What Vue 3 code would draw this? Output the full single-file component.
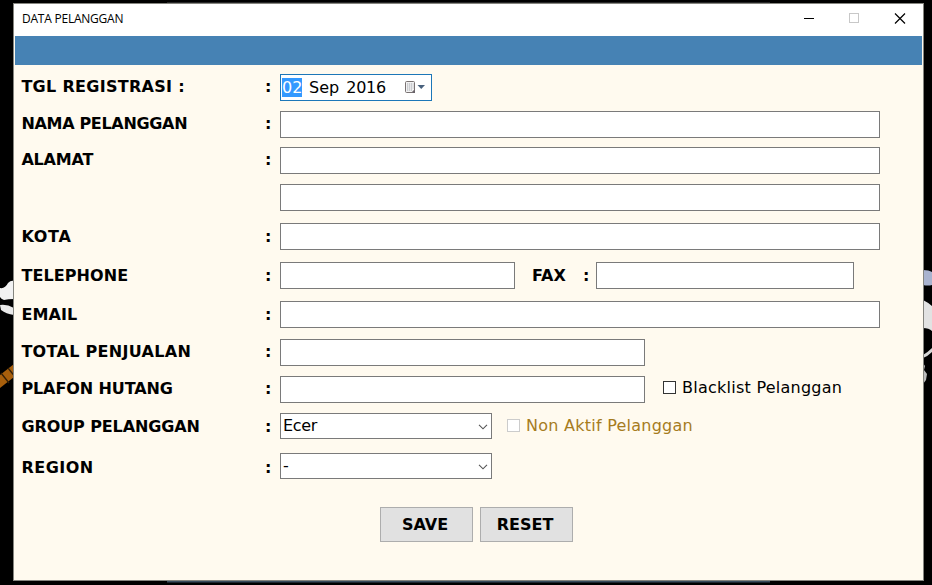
<script setup>
import { ref } from 'vue'

const rows = [
  { id: 'tgl', label: 'TGL REGISTRASI :', colon: true },
  { id: 'nama', label: 'NAMA PELANGGAN', colon: true },
  { id: 'alamat', label: 'ALAMAT', colon: true },
  { id: 'alamat2', label: '', colon: false },
  { id: 'kota', label: 'KOTA', colon: true },
  { id: 'telephone', label: 'TELEPHONE', colon: true },
  { id: 'email', label: 'EMAIL', colon: true },
  { id: 'total', label: 'TOTAL PENJUALAN', colon: true },
  { id: 'plafon', label: 'PLAFON HUTANG', colon: true },
  { id: 'group', label: 'GROUP PELANGGAN', colon: true },
  { id: 'region', label: 'REGION', colon: true }
]
const combos = { group: 'Ecer', region: '-' }
const blacklist = ref(false)
</script>

<template>
  <div class="desktop">
    <svg class="wallpaper" width="932" height="585" viewBox="0 0 932 585">
      <path d="M0 288Q5 289 8 283Q11 280 14 281V299Q8 299 4 300Q1 299 0 297Z" fill="#f2f2f2" />
      <path d="M0 305Q7 304 14 308V315Q6 314 1 310Z" fill="#e9e9e9" />
      <path d="M0 375L14 364V377L0 388Z" fill="#a85f0c" />
      <path d="M1 373L9 383M8 368L16 378" stroke="#352006" stroke-width="1.3" />
      <path d="M923 270Q929 270 932 272V285Q928 286 923 285Z" fill="#a9b3cf" />
      <path d="M923 300Q929 303 932 306V331Q929 328 923 328Z" fill="#e2e2e2" />
      <path d="M923 355Q928 352 932 348V352Q928 356 923 358Z" fill="#d6d6d6" />
      <path d="M923 363L925 366L924 370L927 374L926 380L923 384Z" fill="#bcbcbc" />
      <path d="M167 2.5H770" stroke="#262626" />
      <path d="M167 581.5H770" stroke="#3a4c5e" stroke-width="2" />
    </svg>
    <div class="window">
      <header class="titlebar">
        <span class="title">DATA PELANGGAN</span>
        <svg class="controls" width="112" height="32" viewBox="0 0 112 32" fill="none" shape-rendering="crispEdges">
          <path d="M4 14.5H14" stroke="#000" />
          <rect x="49.5" y="9.5" width="9" height="9" stroke="#c8c8c8" />
          <path d="M95 9.5L105 19.5M105 9.5L95 19.5" stroke="#000" stroke-width="1.2" shape-rendering="auto" />
        </svg>
      </header>
      <div class="banner"></div>
      <form class="form" @submit.prevent>
        <div v-for="row in rows" :key="row.id" class="row" :class="row.id">
          <span class="label">{{ row.label }}</span>
          <span class="colon">{{ row.colon ? ':' : '' }}</span>
          <div v-if="row.id === 'tgl'" class="box date">
            <span class="day">02</span>
            <span class="month">Sep</span>
            <span class="year">2016</span>
            <svg class="calendar" width="22" height="15" viewBox="0 0 22 15">
              <path d="M2.6 1.5H9.5Q10.5 1.5 10.5 2.5V10L8 12.5H2.6Q1.5 12.5 1.5 11.4V2.6Q1.5 1.5 2.6 1.5Z" fill="#f2f2f2" stroke="#797272" />
              <path d="M3 4H9.5M3 6H9.5M3 8H9.5M3 10H8" stroke="#a2a5ad" stroke-dasharray="1.3 .7" />
              <path d="M11 9.3V13H7.5Z" fill="#696369" />
              <path d="M13.5 5H21L17.25 9Z" fill="#49617d" />
            </svg>
          </div>
          <div v-else-if="combos[row.id]" class="box combo">
            <span class="value">{{ combos[row.id] }}</span>
            <svg class="arrow" width="10" height="6" viewBox="0 0 10 6" fill="none">
              <path d="M1 .8L5 4.8L9 .8" stroke="#555" stroke-width="1.1" />
            </svg>
          </div>
          <input v-else class="box" type="text" />
          <template v-if="row.id === 'telephone'">
            <span class="fax-label">FAX</span>
            <span class="fax-colon">:</span>
            <input class="box fax" type="text" />
          </template>
          <label v-if="row.id === 'plafon'" class="check">
            <input v-model="blacklist" type="checkbox" /><span>Blacklist Pelanggan</span>
          </label>
          <label v-if="row.id === 'group'" class="check disabled">
            <input type="checkbox" disabled /><span>Non Aktif Pelanggan</span>
          </label>
        </div>
        <div class="actions">
          <button type="button">SAVE</button>
          <button type="button">RESET</button>
        </div>
      </form>
    </div>
  </div>
</template>

<style>
body { background: #000; overflow: hidden; }
</style>

<style scoped>
* { box-sizing: border-box; }
.desktop {
  position: relative;
  width: 932px;
  height: 585px;
  padding: 3px 8px 4px 13px;
  background: #000;
  font-family: "DejaVu Sans", sans-serif;
  font-size: 16px;
  color: #000;
}
.wallpaper { position: absolute; inset: 0; }
.window {
  position: relative;
  width: 911px;
  height: 578px;
  background: #fffaef;
  border: 1px solid #85857f;
}
.titlebar {
  display: flex;
  justify-content: space-between;
  height: 32px;
  padding: 0 11px 0 8px;
  background: #fff;
}
.title {
  font: 12px/30px "Open Sans", sans-serif;
  letter-spacing: -0.23px;
}
.banner {
  height: 29px;
  margin: 0 1px;
  background: #4682b4;
}
.form { padding-left: 7px; }
.row {
  display: flex;
  height: 27px;
  margin-top: 12px;
}
.tgl { margin-top: 9px; }
.nama, .alamat2, .plafon, .group { margin-top: 10px; }
.alamat { margin-top: 9px; }
.total { margin-top: 11px; }
.group, .region { height: 26px; }
.region { margin-top: 14px; }
.label, .colon, .fax-label, .fax-colon {
  font-weight: bold;
  line-height: 25px;
  white-space: nowrap;
}
.label { width: 244px; padding-left: 0.4px; }
.colon { width: 15px; }
.kota > span, .telephone > span, .email > span, .group > span { line-height: 27px; }
.region > span { line-height: 29px; }
.tgl .label, .total .label { letter-spacing: 0.3px; }
.nama .label { letter-spacing: -0.32px; }
.alamat .label { letter-spacing: -0.2px; }
.kota .label { letter-spacing: 0.7px; }
.telephone .label, .email .label { letter-spacing: 0.1px; }
.plafon .label, .group .label { letter-spacing: -0.1px; }
.region .label { letter-spacing: 0.5px; }
.box {
  width: 600px;
  height: 100%;
  padding: 0 3px 0 2px;
  border: 1px solid #7a7a7a;
  border-radius: 0;
  background: #fff;
  font: inherit;
  outline: none;
}
.telephone .box { width: 235px; }
.total .box, .plafon .box { width: 365px; }
.telephone .fax { width: 258px; }
.fax-label { width: 51px; margin-left: 17px; }
.fax-colon { width: 13px; }
.date {
  display: flex;
  align-items: center;
  width: 152px;
  padding: 0 1px;
  border-color: #1d77b8;
}
.day {
  width: 20px;
  height: 19px;
  line-height: 19px;
  background: #3399ff;
  color: #fff;
}
.month, .year { margin-left: 7px; }
.year { letter-spacing: -0.2px; }
.calendar { margin: 0 4px 0 auto; }
.combo {
  display: flex;
  align-items: center;
  justify-content: space-between;
  width: 212px;
}
.value { line-height: 22px; letter-spacing: -0.3px; }
.arrow { margin-top: 2px; }
.check {
  display: flex;
  align-items: center;
  height: 22px;
  margin-left: 18px;
  letter-spacing: 0.25px;
  white-space: nowrap;
}
.check input {
  appearance: none;
  width: 13px;
  height: 13px;
  margin: 0 6px 0 0;
  border: 1px solid #333;
  background: #fff;
}
.check.disabled {
  height: 24px;
  margin-left: 15px;
  color: #a67c1e;
}
.check.disabled input { border-color: #ccc; }
.actions {
  display: flex;
  gap: 7px;
  margin: 28px 0 0 359px;
}
button {
  width: 93px;
  height: 35px;
  padding: 0 3px 1px 0;
  border: 1px solid #adadad;
  border-radius: 0;
  background: #e1e1e1;
  color: #000;
  font: bold 16px "DejaVu Sans", sans-serif;
}
</style>
